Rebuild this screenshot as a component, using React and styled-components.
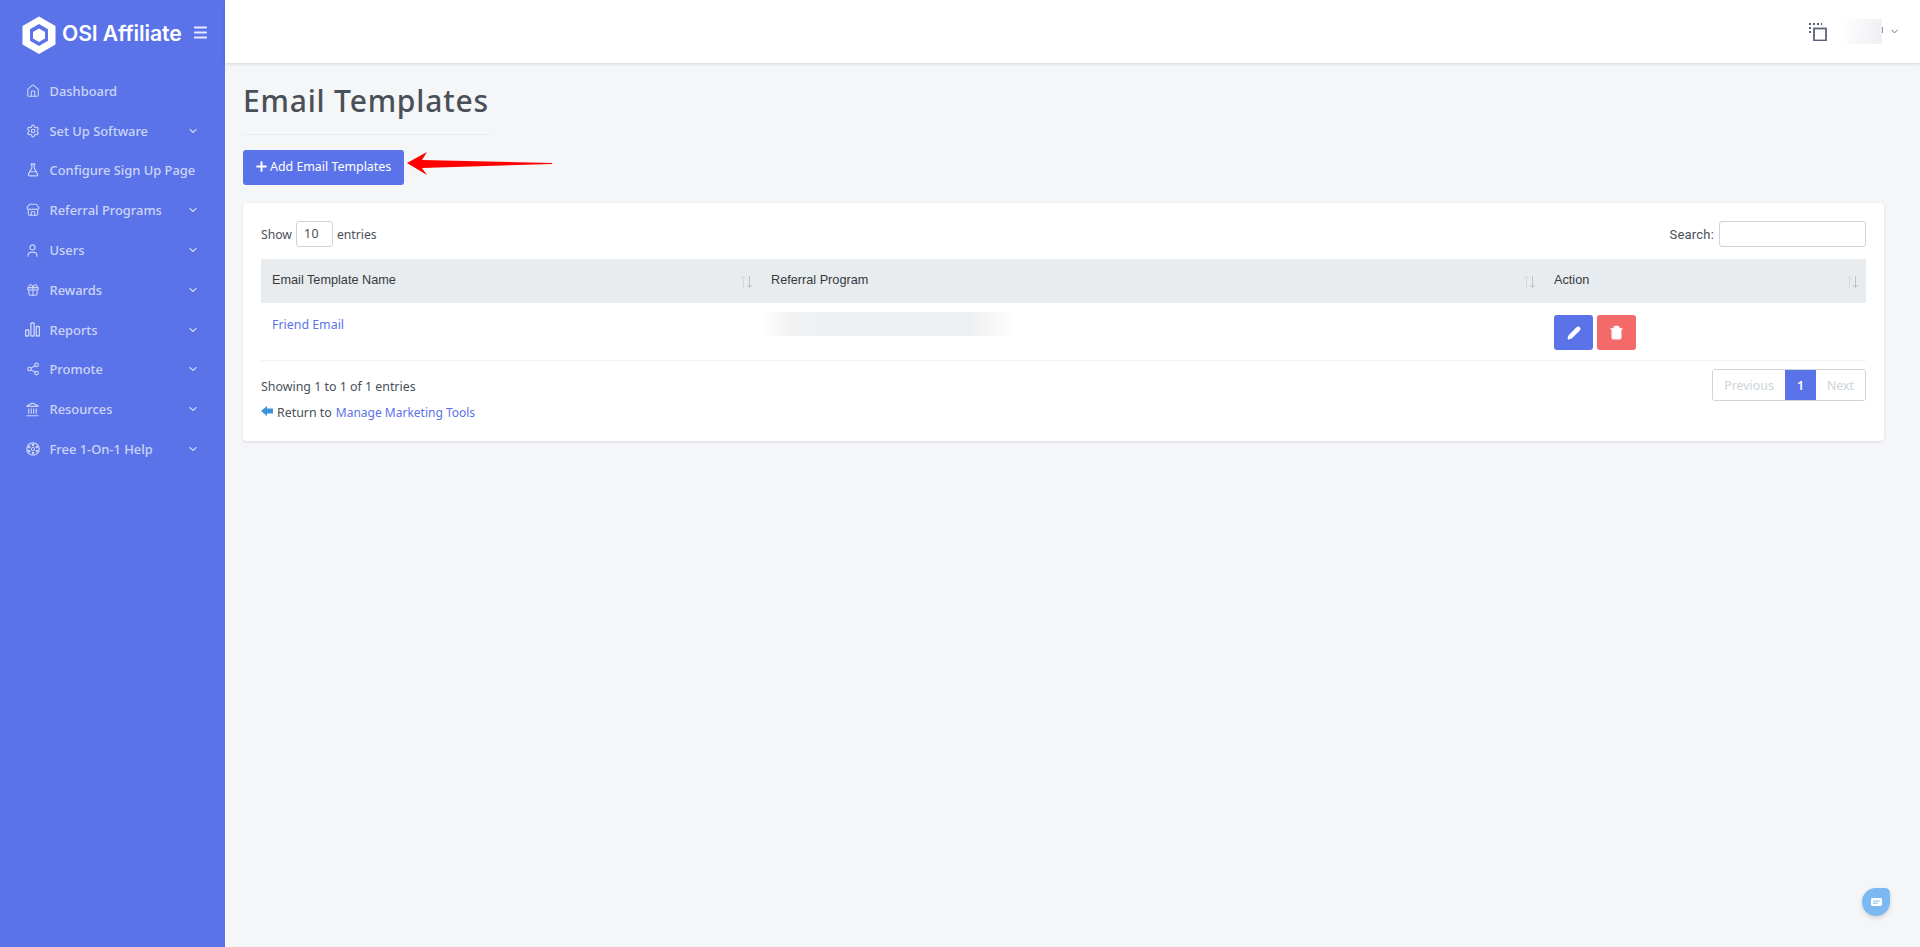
import React from "react";
import styled, { createGlobalStyle } from "styled-components";
import {
  Home, Settings, FlaskConical, Store, User, Gift, Share2, Landmark,
  ChevronDown, Menu, Plus, Pencil, Trash2,
} from "lucide-react";

const Global = createGlobalStyle`
  html, body { margin: 0; padding: 0; height: 100%; }
  body {
    background: #f5f6f8;
    font-family: "Noto Sans", "Open Sans", sans-serif;
    font-size: 13px;
    color: #495057;
  }
  * { box-sizing: border-box; }
`;

const Shell = styled.div`
  display: flex;
  height: 947px;
  overflow: hidden;
`;

const Sidebar = styled.aside`
  width: 225px;
  flex: none;
  background: #5a73e8;
`;

const Brand = styled.div`
  height: 71px;
  display: flex;
  align-items: center;
  padding: 0 0 2px 22px;
`;

const BrandName = styled.span`
  margin: 0 0 4px 6px;
  font-family: "Inter", sans-serif;
  font-size: 21.2px;
  font-weight: 600;
  color: #fff;
  white-space: nowrap;
  letter-spacing: -0.1px;
`;

const Burger = styled.span`
  display: flex;
  margin: 0 0 4px 10px;
  color: #e6eafc;
`;

const Nav = styled.nav`
  display: flex;
  flex-direction: column;
`;

const NavRow = styled.a`
  height: 39.8px;
  display: flex;
  align-items: center;
  padding: 0 26px 0 25px;
  color: #ccd5f8;
  font-size: 12.9px;
  font-weight: 500;
  white-space: nowrap;
`;

const NavIcon = styled.span`
  display: flex;
  width: 15px;
  margin-right: 9.500px;
  justify-content: center;
`;

const NavCaret = styled.span`
  display: flex;
  margin-left: auto;
`;

const Main = styled.div`
  flex: 1;
  display: flex;
  flex-direction: column;
  min-width: 0;
`;

const Topbar = styled.header`
  height: 63px;
  flex: none;
  background: #fff;
  box-shadow: 0 1px 3px rgba(15, 34, 58, 0.15);
  display: flex;
  align-items: center;
  justify-content: flex-end;
  padding: 0 20px 0 0;
  color: #5b6178;
`;

const UserBlur = styled.div`
  position: relative;
  width: 39px;
  height: 25px;
  margin: 0 7px 0 16px;
  background: linear-gradient(100deg, #ffffff, #eeeff3);

  &::after {
    content: "";
    position: absolute;
    right: -1px;
    top: 8px;
    width: 1px;
    height: 6px;
    background: #8b8f9c;
  }
`;

const Content = styled.main`
  position: relative;
  flex: 1;
  padding: 0 36px 0 18px;
`;

const TitleBlock = styled.div`
  width: 246px;
  height: 72px;
  border-bottom: 1px solid #e9ebee;
  display: flex;
  align-items: center;
  padding-top: 4px;
`;

const Title = styled.h1`
  margin: 0;
  font-family: "Noto Sans", sans-serif;
  font-size: 30px;
  font-weight: 500;
  color: #495057;
  letter-spacing: 0.8px;
  white-space: nowrap;
`;

const AddButton = styled.button`
  display: flex;
  align-items: center;
  gap: 1px;
  width: 161px;
  height: 35px;
  margin-top: 15px;
  padding: 0 0 2px 11px;
  border: 0;
  border-radius: 3px;
  background: #5b73e8;
  color: #fff;
  font: 400 12.4px "Noto Sans", sans-serif;
  white-space: nowrap;
`;

const Arrow = styled.svg`
  position: absolute;
  left: 180px;
  top: 87px;
`;

const Card = styled.section`
  margin-top: 18px;
  height: 238px;
  background: #fff;
  border-radius: 4px;
  box-shadow: 0 1px 3px rgba(15, 34, 58, 0.12);
  padding: 18px 18px 0;
`;

const ControlRow = styled.div`
  display: flex;
  justify-content: space-between;
  align-items: center;
  height: 26px;
`;

const Label = styled.label`
  display: flex;
  align-items: center;
  gap: 4px;
  font-size: 12.2px;
  color: #495057;
`;

const SearchLabel = styled(Label)`
  gap: 5px;
  font-family: "Roboto", sans-serif;
  font-size: 13px;
  letter-spacing: 0.2px;
`;

const Field = styled.div`
  width: ${(p) => p.$width}px;
  height: 26px;
  border: 1px solid #ced4da;
  border-radius: 3px;
  padding-left: 7px;
  line-height: 23px;
  font-size: 12.4px;
  letter-spacing: 0.6px;
  background: #fff;
`;

const Table = styled.div`
  margin-top: 12px;
`;

const Cols = styled.div`
  display: grid;
  grid-template-columns: 499px 783px 1fr;
`;

const HeadRow = styled(Cols)`
  height: 44px;
  background: #e9ecef;
`;

const HeadCell = styled.div`
  display: flex;
  align-items: center;
  justify-content: space-between;
  padding: 0 7px 2px 11px;
  font-family: "Liberation Sans", sans-serif;
  font-size: 12.7px;
  color: #343a40;
`;

const SortArrows = styled.svg`
  margin-top: 4px;
`;

const BodyRow = styled(Cols)`
  height: 58px;
  border-bottom: 1px solid #eff2f7;
`;

const BodyCell = styled.div`
  padding: 12px 11px 0;
`;

const LinkText = styled.a`
  color: #5b73e8;
  font-size: ${(p) => (p.$small ? "12px" : "12.4px")};
`;

const BlurLine = styled.div`
  width: 257px;
  height: 24px;
  margin: -3px 0 0 -12px;
  background: linear-gradient(90deg, #fff, #f0f1f2 14%, #eeeff0 82%, #fff);
`;

const Actions = styled.div`
  display: flex;
  gap: 4px;
`;

const IconButton = styled.button`
  width: 39px;
  height: 35px;
  border: 0;
  border-radius: 3px;
  display: flex;
  align-items: center;
  justify-content: center;
  color: #fff;
  background: ${(p) => p.$bg};
`;

const Footer = styled.div`
  display: flex;
  justify-content: space-between;
  padding-top: 8px;
`;

const Info = styled.div`
  font-size: 12.4px;
  color: #495057;
  padding-top: 9px;
`;

const ReturnLine = styled.div`
  display: flex;
  align-items: center;
  margin-top: 9px;
  gap: 4px;

  & > svg {
    margin-top: -4px;
  }
`;

const Pager = styled.div`
  display: flex;
  height: 32px;
  border: 1px solid #ced4da;
  border-radius: 3px;
  overflow: hidden;
`;

const PageItem = styled.span`
  display: flex;
  align-items: center;
  justify-content: center;
  width: ${(p) => p.$width}px;
  margin: ${(p) => (p.$active ? "-1px 0" : "0")};
  font-size: 12.4px;
  font-weight: ${(p) => (p.$active ? 600 : 400)};
  background: ${(p) => (p.$active ? "#5b73e8" : "#fff")};
  color: ${(p) => (p.$active ? "#fff" : "#ced4da")};
`;

const ChatBubble = styled.div`
  position: fixed;
  left: 1862px;
  top: 888px;
  width: 28px;
  height: 28px;
  border-radius: 50% 5px 50% 50%;
  background: #7cb9f2;
  box-shadow: 0 2px 4px rgba(0, 0, 0, 0.15);
  display: flex;
  align-items: center;
  justify-content: center;
`;

const BarsIcon = () => (
  <svg width="15" height="15" viewBox="0 0 15 15" fill="none" stroke="currentColor" strokeWidth="1.3">
    <rect x="0.6" y="8" width="3.2" height="6" rx="0.4" />
    <rect x="5.9" y="1" width="3.2" height="13" rx="0.4" />
    <rect x="11.2" y="4.5" width="3.2" height="9.5" rx="0.4" />
  </svg>
);

const HelpIcon = () => (
  <svg width="14" height="14" viewBox="0 0 14 14" fill="none" stroke="currentColor">
    <circle cx="7" cy="7" r="6.2" strokeWidth="1.3" />
    <circle cx="7" cy="7" r="1.6" strokeWidth="1" />
    <g fill="currentColor" stroke="none">
      <circle cx="7" cy="3" r="1.3" />
      <circle cx="7" cy="11" r="1.3" />
      <circle cx="3.2" cy="5" r="1.3" />
      <circle cx="10.8" cy="5" r="1.3" />
      <circle cx="3.2" cy="9" r="1.3" />
      <circle cx="10.8" cy="9" r="1.3" />
    </g>
  </svg>
);

const navItems = [
  { label: "Dashboard", icon: <Home size={14} strokeWidth={1.8} /> },
  { label: "Set Up Software", icon: <Settings size={14} strokeWidth={2} />, caret: true },
  { label: "Configure Sign Up Page", icon: <FlaskConical size={14} strokeWidth={2} /> },
  { label: "Referral Programs", icon: <Store size={14} strokeWidth={1.8} />, caret: true },
  { label: "Users", icon: <User size={15} strokeWidth={1.9} />, caret: true },
  { label: "Rewards", icon: <Gift size={14} strokeWidth={1.9} />, caret: true },
  { label: "Reports", icon: <BarsIcon />, caret: true },
  { label: "Promote", icon: <Share2 size={14} strokeWidth={1.9} />, caret: true },
  { label: "Resources", icon: <Landmark size={15} strokeWidth={1.8} />, caret: true },
  { label: "Free 1-On-1 Help", icon: <HelpIcon />, caret: true },
];

const Sort = () => (
  <SortArrows width="13" height="14" viewBox="0 0 13 14" fill="none" strokeWidth="1">
    <path stroke="#d5d9dd" d="M3.5 13V1.5M1 4l2.500-2.500L6 4" />
    <path stroke="#bcc2c8" d="M9.500 1v11.500M7 10l2.500 2.500L12 10" />
  </SortArrows>
);

export default function App() {
  return (
    <Shell>
      <Global />
      <Sidebar>
        <Brand>
          <svg width="34" height="38" viewBox="0 0 34 38">
            <path
              fillRule="evenodd"
              fill="#fff"
              d="M17 0.500L33.500 10V28.500L17 38L0.500 28.500V10ZM17 8L8 13.200V24.800L17 30L26 24.800V13.200Z"
            />
            <path fill="#fff" d="M17 12.500L23 16V22.500L17 26L11 22.500V16Z" />
          </svg>
          <BrandName>OSI Affiliate</BrandName>
          <Burger><Menu size={17} strokeWidth={2.6} /></Burger>
        </Brand>
        <Nav>
          {navItems.map((item) => (
            <NavRow key={item.label}>
              <NavIcon>{item.icon}</NavIcon>
              {item.label}
              {item.caret && <NavCaret><ChevronDown size={12} strokeWidth={2.2} /></NavCaret>}
            </NavRow>
          ))}
        </Nav>
      </Sidebar>

      <Main>
        <Topbar>
          <svg width="18" height="18" viewBox="0 0 18 18" fill="none" stroke="currentColor">
            <rect x="5" y="5.500" width="12" height="12" strokeWidth="1.800" />
            <path d="M0 1h13M1 0v12" strokeWidth="2" strokeDasharray="2 2" />
          </svg>
          <UserBlur />
          <ChevronDown size={11} strokeWidth={2} />
        </Topbar>
        <Content>
          <TitleBlock><Title>Email Templates</Title></TitleBlock>
          <AddButton><Plus size={15} strokeWidth={3} />Add Email Templates</AddButton>
          <Arrow width="150" height="28" viewBox="0 0 150 28">
            <path fill="#fe0000" d="M2 13L22 2L17 10L147 13V14L17 18L22 25Z" />
          </Arrow>
          <Card>
            <ControlRow>
              <Label>Show <Field $width={37}>10</Field> entries</Label>
              <SearchLabel>Search: <Field $width={147} /></SearchLabel>
            </ControlRow>
            <Table>
              <HeadRow>
                <HeadCell>Email Template Name<Sort /></HeadCell>
                <HeadCell>Referral Program<Sort /></HeadCell>
                <HeadCell>Action<Sort /></HeadCell>
              </HeadRow>
              <BodyRow>
                <BodyCell><LinkText>Friend Email</LinkText></BodyCell>
                <BodyCell><BlurLine /></BodyCell>
                <BodyCell>
                  <Actions>
                    <IconButton $bg="#5b73e8"><Pencil size={14} fill="#fff" /></IconButton>
                    <IconButton $bg="#f46a6a"><Trash2 size={15} fill="#fff" /></IconButton>
                  </Actions>
                </BodyCell>
              </BodyRow>
            </Table>
            <Footer>
              <Info>
                Showing 1 to 1 of 1 entries
                <ReturnLine>
                  <svg width="12" height="10" viewBox="0 0 12 10"><path fill="#3f93dc" d="M0 5L6 0V2.500H12V7.500H6V10Z" /></svg>
                  Return to <LinkText $small>Manage Marketing Tools</LinkText>
                </ReturnLine>
              </Info>
              <Pager>
                <PageItem $width={72}>Previous</PageItem>
                <PageItem $width={31} $active>1</PageItem>
                <PageItem $width={49}>Next</PageItem>
              </Pager>
            </Footer>
          </Card>
        </Content>
      </Main>
      <ChatBubble>
        <svg width="11" height="8" viewBox="0 0 11 8">
          <rect width="11" height="8" rx="1.500" fill="#fff" />
          <path d="M2 3h7M2 5.200h5" stroke="#7cb9f2" strokeWidth="0.9" />
        </svg>
      </ChatBubble>
    </Shell>
  );
}
